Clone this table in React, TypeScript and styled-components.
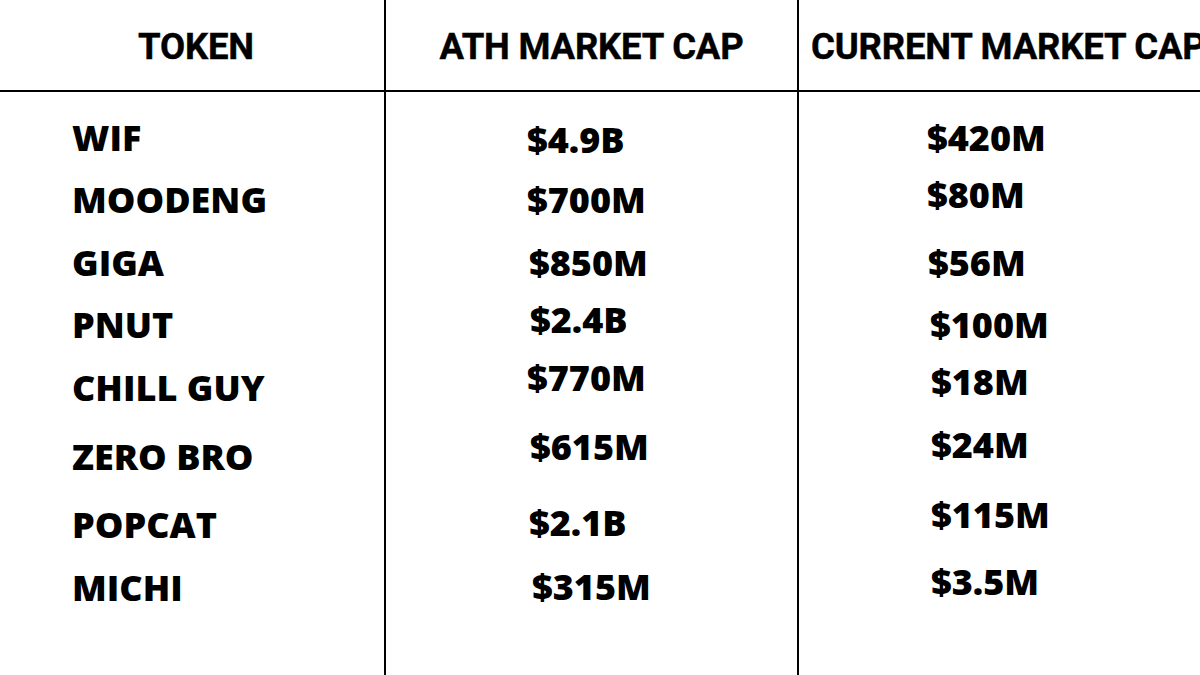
import React from 'react';
import styled, { createGlobalStyle } from 'styled-components';

const GlobalStyle = createGlobalStyle`
  html, body {
    margin: 0;
    padding: 0;
    background: #fff;
  }
  body {
    width: 1200px;
    height: 675px;
    overflow: hidden;
  }
`;

const Table = styled.div`
  display: grid;
  grid-template-columns: 386px 413px 1fr;
  height: 675px;
  color: #000;
`;

const Column = styled.div<{ $divider?: boolean }>`
  display: flex;
  flex-direction: column;
  border-right: ${(p) => (p.$divider ? '2px solid #000' : 'none')};
  min-width: 0;
`;

const HeaderCell = styled.div<{ $align: 'center' | 'left'; $pad: number }>`
  height: 92px;
  border-bottom: 2px solid #000;
  display: flex;
  align-items: center;
  justify-content: ${(p) => (p.$align === 'center' ? 'center' : 'flex-start')};
  padding-left: ${(p) => p.$pad}px;
  padding-top: 2px;
  font-family: Roboto, 'Liberation Sans', sans-serif;
  font-weight: 700;
  font-size: 36.5px;
  letter-spacing: -0.2px;
  -webkit-text-stroke: 0.4px #000;
  white-space: nowrap;
  overflow: hidden;
  box-sizing: border-box;
`;

const Body = styled.div`
  display: flex;
  flex-direction: column;
  align-items: flex-start;
`;

const Cell = styled.div<{ $mt: number; $ml: number }>`
  margin-top: ${(p) => p.$mt}px;
  margin-left: ${(p) => p.$ml}px;
  height: 36px;
  line-height: 36px;
  font-family: 'Open Sans', 'Liberation Sans', sans-serif;
  font-weight: 800;
  font-size: 36px;
  white-space: nowrap;
`;

type Entry = { text: string; top: number; x: number };

const tokens: Entry[] = [
  { text: 'WIF', top: 128, x: 74 },
  { text: 'MOODENG', top: 190, x: 74 },
  { text: 'GIGA', top: 253, x: 74 },
  { text: 'PNUT', top: 315, x: 74 },
  { text: 'CHILL GUY', top: 378, x: 74 },
  { text: 'ZERO BRO', top: 447, x: 74 },
  { text: 'POPCAT', top: 515, x: 74 },
  { text: 'MICHI', top: 578, x: 74 },
];

const athCaps: Entry[] = [
  { text: '$4.9B', top: 130, x: 529 },
  { text: '$700M', top: 190, x: 529 },
  { text: '$850M', top: 253, x: 531 },
  { text: '$2.4B', top: 310, x: 532 },
  { text: '$770M', top: 368, x: 529 },
  { text: '$615M', top: 437, x: 532 },
  { text: '$2.1B', top: 513, x: 531 },
  { text: '$315M', top: 577, x: 534 },
];

const currentCaps: Entry[] = [
  { text: '$420M', top: 128, x: 929 },
  { text: '$80M', top: 185, x: 929 },
  { text: '$56M', top: 253, x: 930 },
  { text: '$100M', top: 315, x: 932 },
  { text: '$18M', top: 372, x: 933 },
  { text: '$24M', top: 435, x: 933 },
  { text: '$115M', top: 505, x: 933 },
  { text: '$3.5M', top: 572, x: 933 },
];

// cap top sits ~6px below the 36px line box top
const CAP_OFFSET = 6;
const BODY_START = 94;

const renderCells = (items: Entry[], colLeft: number) => {
  let prevBottom = BODY_START;
  return items.map((item) => {
    const boxTop = item.top - CAP_OFFSET;
    const mt = boxTop - prevBottom;
    prevBottom = boxTop + 36;
    return (
      <Cell key={item.text} $mt={mt} $ml={item.x - colLeft - 2}>
        {item.text}
      </Cell>
    );
  });
};

const App = () => {
  return (
    <>
      <GlobalStyle />
      <Table>
        <Column $divider>
          <HeaderCell $align="center" $pad={8}>TOKEN</HeaderCell>
          <Body>{renderCells(tokens, 0)}</Body>
        </Column>
        <Column $divider>
          <HeaderCell $align="center" $pad={0}>ATH MARKET CAP</HeaderCell>
          <Body>{renderCells(athCaps, 386)}</Body>
        </Column>
        <Column>
          <HeaderCell $align="left" $pad={12}>CURRENT MARKET CAP</HeaderCell>
          <Body>{renderCells(currentCaps, 799)}</Body>
        </Column>
      </Table>
    </>
  );
};

export default App;
